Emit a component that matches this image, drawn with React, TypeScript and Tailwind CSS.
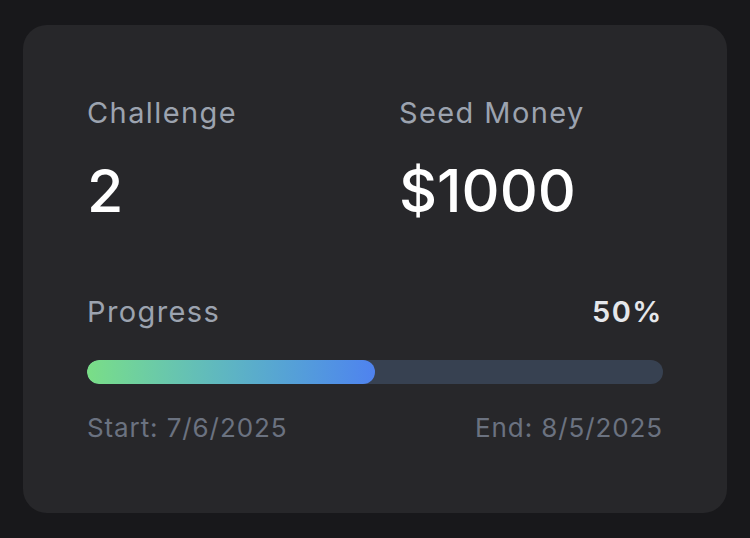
import React from "react";

const ChallengeCard = () => {
  const progress = 50;
  return (
    <div className="w-[704px] rounded-[24px] bg-[#27272a] px-16 pt-[68px] pb-[67px]">
      <div className="grid grid-cols-2 gap-12">
        <div>
          <p className="text-[29px] leading-[40px] tracking-[1.4px] text-[#9ca3af]">Challenge</p>
          <p className="mt-[22px] text-[59px] leading-[72px] font-medium text-white">2</p>
        </div>
        <div>
          <p className="text-[29px] leading-[40px] tracking-[1.4px] text-[#9ca3af]">Seed Money</p>
          <p className="mt-[22px] text-[59px] leading-[72px] font-medium text-white">$1000</p>
        </div>
      </div>

      <div className="mt-[65px]">
        <div className="flex items-center justify-between">
          <span className="text-[29px] leading-[40px] tracking-[1.4px] text-[#9ca3af]">Progress</span>
          <span className="text-[29px] leading-[40px] tracking-[1.5px] font-semibold text-[#e5e7eb]">
            {progress}%
          </span>
        </div>
        <div className="mt-[28px] h-6 w-full rounded-full bg-[#374151] overflow-hidden">
          <div
            className="h-full rounded-full bg-gradient-to-r from-[#7ade86] to-[#4f82ef]"
            style={{ width: `${progress}%` }}
          />
        </div>
        <div className="mt-[26px] flex items-center justify-between text-[26px] leading-[36px] tracking-[0.9px] text-[#6b7280]">
          <span>Start: 7/6/2025</span>
          <span>End: 8/5/2025</span>
        </div>
      </div>
    </div>
  );
};

export default function App() {
  return (
    <div
      className="flex min-h-screen items-center justify-center bg-[#18181b]"
      style={{ fontFamily: "Inter, 'Noto Sans', sans-serif" }}
    >
      <ChallengeCard />
    </div>
  );
}
